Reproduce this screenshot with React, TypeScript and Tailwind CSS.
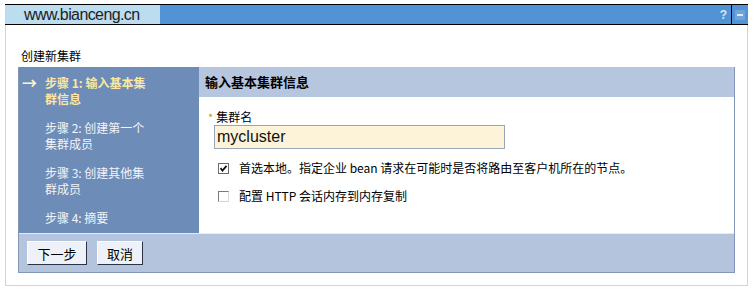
import React from 'react'

const cjk = { fontFamily: '"Noto Sans CJK SC", "Liberation Sans", sans-serif' }

const steps = [
  { lines: ['步骤 1: 输入基本集', '群信息'], active: true },
  { lines: ['步骤 2: 创建第一个', '集群成员'], active: false },
  { lines: ['步骤 3: 创建其他集', '群成员'], active: false },
  { lines: ['步骤 4: 摘要'], active: false },
]

function WizardButton({ label, width }: { label: string; width: string }) {
  return (
    <button
      type="button"
      className={`${width} h-[24px] bg-[#eef2f8] border border-t-[#f8fafd] border-l-[#f8fafd] border-r-[#2a3448] border-b-[#2a3448] text-[13px] text-black leading-none`}
    >
      {label}
    </button>
  )
}

export default function App() {
  return (
    <div className="w-[756px] h-[302px] bg-white pt-[4px] pl-[5px]" style={cjk}>
      <div className="w-[743px]">
        {/* title bar */}
        <div className="h-[21px] flex border-t border-b border-black bg-[#5193d4]">
          <div className="w-[155px] bg-[#bcdcef] flex items-center pl-[19px]">
            <span className="text-[16px] tracking-[-0.6px] text-[#222] leading-none" style={{ fontFamily: '"Liberation Sans", sans-serif' }}>
              www.bianceng.cn
            </span>
          </div>
          <div className="flex-1" />
          <div className="flex items-center pr-[4px]">
            <span className="text-[12px] font-bold text-[#d6e6f6] leading-none" style={{ fontFamily: '"Liberation Sans", sans-serif' }}>?</span>
          </div>
          <div className="w-px bg-black" />
          <div className="w-[16px] flex items-center justify-center">
            <div className="w-[10px] h-[10px] bg-[#6ea4dc] flex items-center justify-center">
              <div className="w-[6px] h-[2px] bg-[#dce9f6]" />
            </div>
          </div>
        </div>

        {/* body */}
        <div className="h-[261px] border-l border-r border-b border-[#d4d4d4] pl-[12px] pr-[12px]">
          <div className="h-[42px] flex items-end pb-[2px] pl-[3px] text-[12px] text-black">创建新集群</div>

          <div className="w-[717px] border border-[#8497b8] border-t-0">
            <div className="flex h-[166px]">
              {/* nav */}
              <div className="w-[180px] bg-[#6e8cb8] pt-[8px]">
                {steps.map((s, i) => (
                  <div key={i} className="flex mb-[13px]">
                    <div className="w-[26px] pl-[3px] text-[15px] leading-[16px] font-bold text-[#fff3c8]">
                      {s.active ? '→' : ''}
                    </div>
                    <div
                      className={`text-[12px] leading-[16px] ${
                        s.active ? 'font-bold text-[#fbe7a2]' : 'text-[#f2f4f8]'
                      }`}
                    >
                      {s.lines.map((l, j) => (
                        <div key={j}>{l}</div>
                      ))}
                    </div>
                  </div>
                ))}
              </div>

              {/* content */}
              <div className="flex-1 bg-white">
                <div className="h-[30px] bg-[#b6c6de] flex items-center pl-[6px] text-[13px] font-bold text-black">
                  输入基本集群信息
                </div>
                <div className="pl-[9px] pt-[13px]">
                  <div className="flex items-center text-[12px] leading-[14px] text-black">
                    <span className="text-[#b49a2c] text-[11px] mr-[3px]">*</span>
                    集群名
                  </div>
                  <div className="ml-[6px] mt-[1px] w-[291px] h-[24px] bg-[#fdf3d8] border border-[#9aa4b4] flex items-center pl-[2px]">
                    <span className="text-[16px] text-[#111] leading-none" style={{ fontFamily: '"Liberation Sans", sans-serif' }}>
                      mycluster
                    </span>
                  </div>
                  <div className="flex items-center ml-[10px] mt-[11px] text-[12px] leading-[16px] text-black">
                    <span className="w-[11px] h-[11px] border border-[#6b6b6b] bg-white flex items-center justify-center mr-[10px]">
                      <svg width="9" height="9" viewBox="0 0 9 9">
                        <path d="M1.5 4.2 L3.5 6.5 L7.5 1.8" stroke="#111" strokeWidth="1.8" fill="none" />
                      </svg>
                    </span>
                    首选本地。指定企业 bean 请求在可能时是否将路由至客户机所在的节点。
                  </div>
                  <div className="flex items-center ml-[10px] mt-[12px] text-[12px] leading-[16px] text-black">
                    <span className="w-[11px] h-[11px] border border-[#7a7a7a] border-r-[#d8d8d8] border-b-[#d8d8d8] bg-white mr-[10px]" />
                    配置 HTTP 会话内存到内存复制
                  </div>
                </div>
              </div>
            </div>

            {/* footer */}
            <div className="h-[39px] bg-[#b4c4dc] border-t border-[#e4eaf4] flex items-center gap-[10px] pl-[8px]">
              <WizardButton label="下一步" width="w-[60px]" />
              <WizardButton label="取消" width="w-[46px]" />
            </div>
          </div>
        </div>
      </div>
    </div>
  )
}
